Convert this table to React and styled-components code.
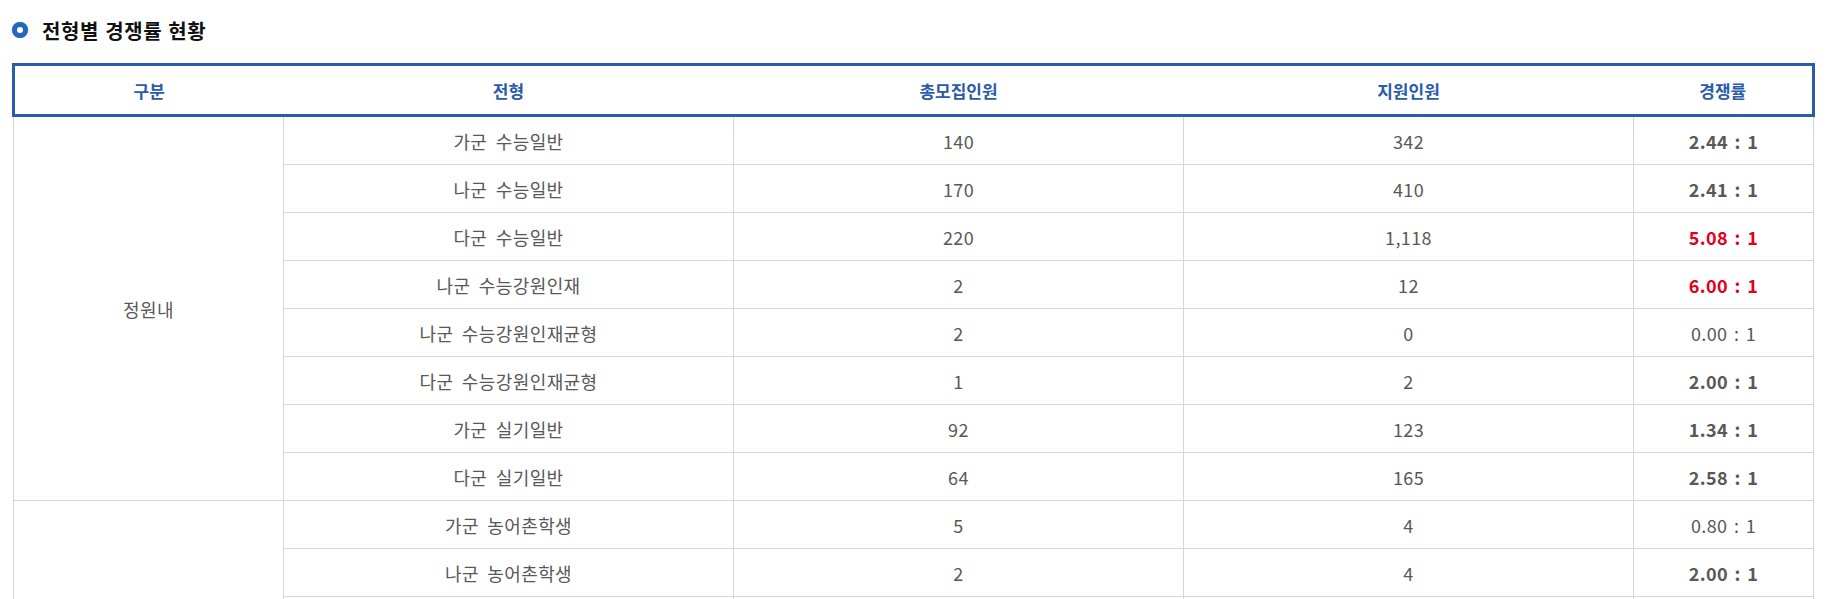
import React from "react";
import styled, { createGlobalStyle } from "styled-components";

const GlobalStyle = createGlobalStyle`
  html, body {
    margin: 0;
    padding: 0;
    background: #fff;
    font-family: "Noto Sans CJK KR", "Noto Sans", sans-serif;
  }
`;

const Page = styled.div`
  padding: 0 15px 0 12px;
`;

const Title = styled.h3`
  display: flex;
  align-items: center;
  gap: 14px;
  height: 60px;
  margin: 0 0 3px;
  font-size: 20px;
  font-weight: 700;
  color: #111;
  letter-spacing: 0.6px;
  word-spacing: 1px;
`;

const Bullet = styled.span`
  width: 16px;
  height: 16px;
  margin-top: -1px;
  box-sizing: border-box;
  border-radius: 50%;
  border: 5px solid #2866bd;
  background: #fff;
  box-shadow: 0 0 1px #5b8fd6;
`;

const Table = styled.table`
  width: 1803px;
  border-collapse: collapse;
  table-layout: fixed;
  text-align: center;
`;

const HeadRow = styled.tr`
  border: 3px solid #2a5da9;
`;

const Th = styled.th`
  height: 48px;
  padding: 0;
  font-size: 17px;
  font-weight: 700;
  color: #2a5ca8;
`;

const Td = styled.td`
  height: 47px;
  padding: 0;
  border: 1px solid #d6d6d6;
  font-size: 18px;
  color: #585858;
  line-height: 20px;
  letter-spacing: 0.4px;
  word-spacing: 4px;
`;

const Rate = styled(Td)`
  font-weight: ${(p) => (p.$strong ? 700 : 400)};
  color: ${(p) => (p.$hot ? "#e2001a" : "#585858")};
  word-spacing: 2px;
`;

const groups = [
  {
    name: "정원내",
    rows: [
      ["가군 수능일반", "140", "342", "2.44"],
      ["나군 수능일반", "170", "410", "2.41"],
      ["다군 수능일반", "220", "1,118", "5.08"],
      ["나군 수능강원인재", "2", "12", "6.00"],
      ["나군 수능강원인재균형", "2", "0", "0.00"],
      ["다군 수능강원인재균형", "1", "2", "2.00"],
      ["가군 실기일반", "92", "123", "1.34"],
      ["다군 실기일반", "64", "165", "2.58"],
    ],
  },
  {
    name: "정원외",
    rows: [
      ["가군 농어촌학생", "5", "4", "0.80"],
      ["나군 농어촌학생", "2", "4", "2.00"],
      ["다군 농어촌학생", "3", "5", "1.67"],
      ["가군 특성화고교졸업자", "2", "3", "1.50"],
      ["나군 특성화고교졸업자", "2", "2", "1.00"],
      ["다군 특성화고교졸업자", "1", "1", "1.00"],
    ],
  },
];

const App = () => {
  return (
    <Page>
      <GlobalStyle />
      <Title>
        <Bullet />
        전형별 경쟁률 현황
      </Title>
      <Table>
        <colgroup>
          <col style={{ width: "15%" }} />
          <col style={{ width: "25%" }} />
          <col style={{ width: "25%" }} />
          <col style={{ width: "25%" }} />
          <col style={{ width: "10%" }} />
        </colgroup>
        <thead>
          <HeadRow>
            <Th>구분</Th>
            <Th>전형</Th>
            <Th>총모집인원</Th>
            <Th>지원인원</Th>
            <Th>경쟁률</Th>
          </HeadRow>
        </thead>
        <tbody>
          {groups.map((g) =>
            g.rows.map((r, i) => {
              const rate = parseFloat(r[3]);
              return (
                <tr key={g.name + i}>
                  {i === 0 && <Td rowSpan={g.rows.length}>{g.name}</Td>}
                  <Td>{r[0]}</Td>
                  <Td>{r[1]}</Td>
                  <Td>{r[2]}</Td>
                  <Rate $strong={rate >= 1} $hot={rate >= 5}>
                    {r[3]} : 1
                  </Rate>
                </tr>
              );
            })
          )}
        </tbody>
      </Table>
    </Page>
  );
};

export default App;
